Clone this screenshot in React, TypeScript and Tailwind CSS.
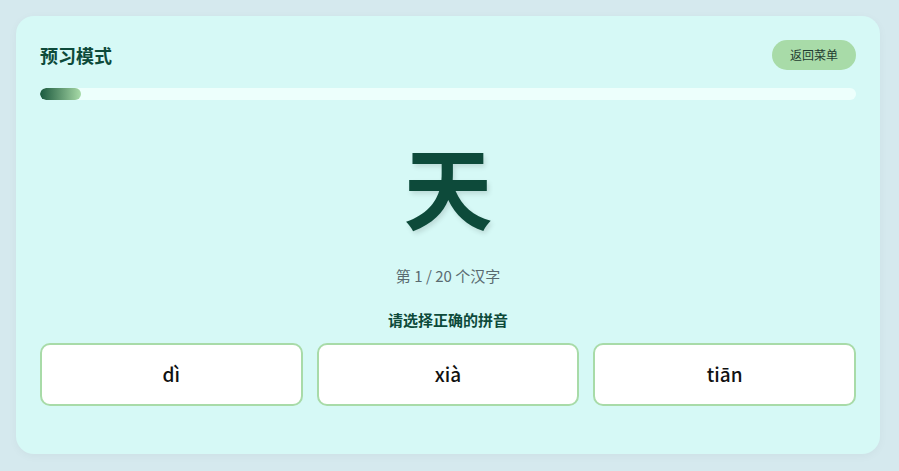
import React from "react";

export default function App() {
  const options = ["dì", "xià", "tiān"];
  return (
    <div
      className="min-h-[471px] w-full bg-[#d5e9ee] py-4 pl-4 pr-[19px]"
      style={{ fontFamily: '"Noto Sans CJK SC", "Noto Sans", sans-serif' }}
    >
      <div className="rounded-[18px] bg-[#d6f9f6] px-6 pt-6 pb-12 shadow-[0_2px_10px_rgba(0,0,0,0.04)]">
        <div className="flex h-[30px] items-center justify-between">
          <h1 className="text-[18px] font-bold leading-none text-[#0d4a3a]">预习模式</h1>
          <button className="flex h-[30px] w-[84px] items-center justify-center rounded-full bg-[#a8dba8] text-[12px] text-[#1f3b30]">
            返回菜单
          </button>
        </div>
        <div className="mt-[18px] h-3 w-full overflow-hidden rounded-full bg-[#edfffc]">
          <div
            className="h-full rounded-full bg-gradient-to-r from-[#185a3f] to-[#a8dba8]"
            style={{ width: "5%" }}
          />
        </div>
        <div className="mt-[41px] flex flex-col items-center">
          <div
            className="h-[99px] text-[89px] font-bold leading-[88px] text-[#0d4a3a]"
            style={{ textShadow: "2px 3px 5px rgba(0,0,0,0.12)" }}
          >
            天
          </div>
          <div className="mt-[26px] text-[15px] leading-5 text-[#5a6b70]">第 1 / 20 个汉字</div>
          <div className="mt-[24px] text-[15px] font-bold leading-5 text-[#0d4a3a]">请选择正确的拼音</div>
        </div>
        <div className="mt-[13px] grid grid-cols-3 gap-[14px]">
          {options.map((o) => (
            <button
              key={o}
              className="flex h-[63px] items-center justify-center rounded-[10px] border-2 border-[#a8dba8] bg-white text-[19px] font-medium text-[#111]"
            >
              {o}
            </button>
          ))}
        </div>
      </div>
    </div>
  );
}
